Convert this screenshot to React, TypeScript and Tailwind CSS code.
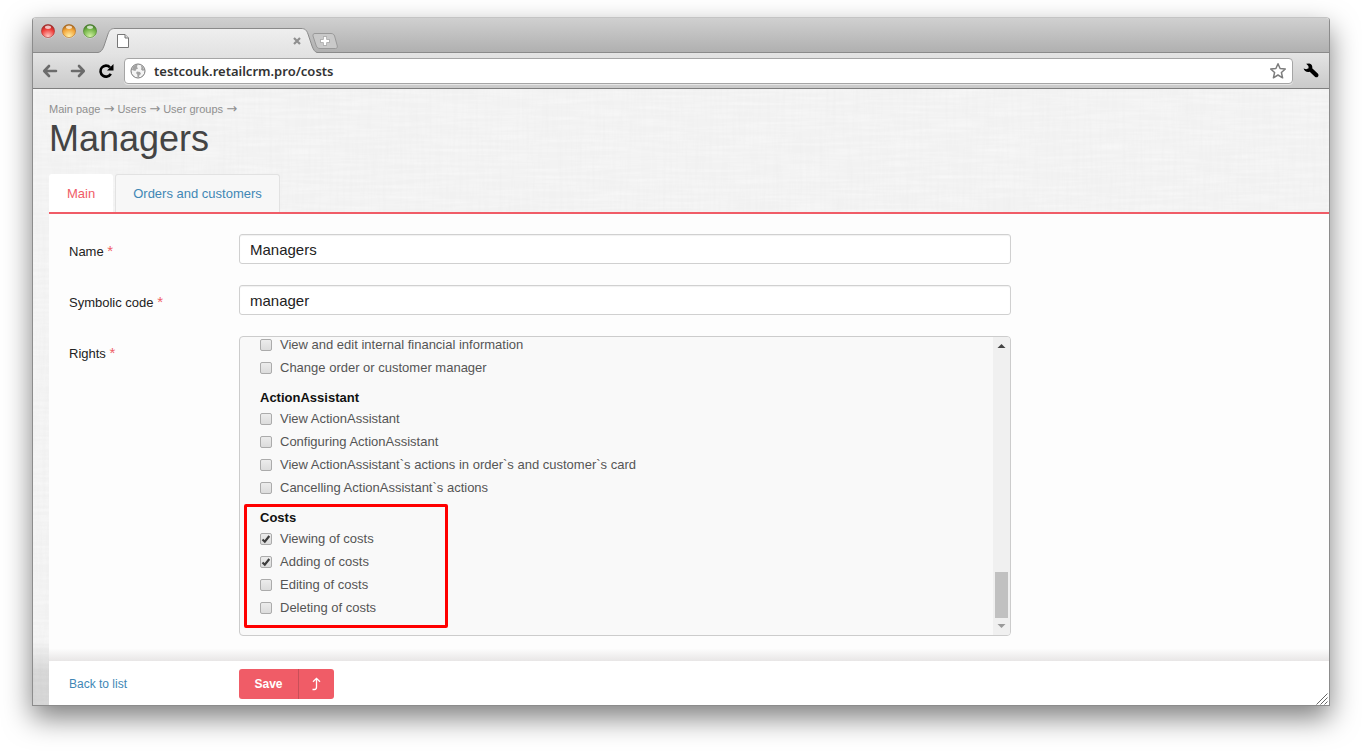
import { useState } from "react";

interface Right {
  id: string;
  label: string;
  checked?: boolean;
}

interface RightGroup {
  title?: string;
  highlighted?: boolean;
  rights: Right[];
}

const GROUPS: RightGroup[] = [
  {
    rights: [
      { id: "finance", label: "View and edit internal financial information" },
      { id: "change-manager", label: "Change order or customer manager" },
    ],
  },
  {
    title: "ActionAssistant",
    rights: [
      { id: "aa-view", label: "View ActionAssistant" },
      { id: "aa-configure", label: "Configuring ActionAssistant" },
      { id: "aa-actions", label: "View ActionAssistant`s actions in order`s and customer`s card" },
      { id: "aa-cancel", label: "Cancelling ActionAssistant`s actions" },
    ],
  },
  {
    title: "Costs",
    highlighted: true,
    rights: [
      { id: "costs-view", label: "Viewing of costs", checked: true },
      { id: "costs-add", label: "Adding of costs", checked: true },
      { id: "costs-edit", label: "Editing of costs" },
      { id: "costs-delete", label: "Deleting of costs" },
    ],
  },
];

function TrafficLight({ id, label, dark, mid, light }: { id: string; label: string; dark: string; mid: string; light: string }) {
  return (
    <button aria-label={label} className="h-4 w-4">
      <svg viewBox="0 0 16 16" className="h-4 w-4">
        <defs>
          <radialGradient id={id} cx="0.5" cy="0.9" r="0.85">
            <stop offset="0" stopColor={light} />
            <stop offset="0.65" stopColor={mid} />
            <stop offset="1" stopColor={dark} />
          </radialGradient>
        </defs>
        <circle cx="8" cy="8.8" r="6.8" fill="#fff" opacity="0.5" />
        <circle cx="8" cy="8" r="6.6" fill={`url(#${id})`} stroke={dark} strokeOpacity="0.7" strokeWidth="0.8" />
        <ellipse cx="8" cy="4.2" rx="3" ry="1.700" fill="#fff" opacity="0.7" />
      </svg>
    </button>
  );
}

function TabStrip() {
  return (
    <div className="flex h-[35px] border-b border-[#8a8a8a] bg-linear-to-b from-[#d0d0d0] to-[#b0b0b0] pl-[7px]">
      <div className="flex gap-[5px] pt-[5px]">
        <TrafficLight id="close-dot" label="Close window" dark="#a02a28" mid="#ee3c38" light="#ffc9c4" />
        <TrafficLight id="min-dot" label="Minimize window" dark="#a8661c" mid="#f2a437" light="#fff0a8" />
        <TrafficLight id="zoom-dot" label="Zoom window" dark="#457a2a" mid="#74b548" light="#d3f3a4" />
      </div>
      <div className="relative -mb-px mt-[10px] h-[25px] w-[219px]">
        <svg viewBox="0 0 219 25" className="absolute inset-0 h-full w-full">
          <defs>
            <linearGradient id="tab-fill" x1="0" y1="0" x2="0" y2="1">
              <stop offset="0" stopColor="#efefef" />
              <stop offset="1" stopColor="#e3e3e3" />
            </linearGradient>
          </defs>
          <path
            d="M0 24.5C3 24 4.500 22 6 18L10 6C11.500 2 13 .5 17 .5H203C207 .5 208.500 2 210 6L214 18C215.500 22 217 24 219 24.500V25H0Z"
            fill="url(#tab-fill)"
          />
          <path
            d="M0 24.5C3 24 4.500 22 6 18L10 6C11.500 2 13 .5 17 .5H203C207 .5 208.500 2 210 6L214 18C215.500 22 217 24 219 24.500"
            fill="none"
            stroke="#8a8a8a"
          />
        </svg>
        <div className="relative flex h-full items-center justify-between pl-[19px] pr-4">
          <svg viewBox="0 0 12 14" className="h-[14px] w-3">
            <path d="M.5.5H8L11.500 4V13.500H.5Z" fill="#fff" stroke="#777" />
            <path d="M8 .5V4H11.500" fill="#ddd" stroke="#777" />
          </svg>
          <button aria-label="Close tab">
            <svg viewBox="0 0 8 8" className="h-2 w-2">
              <path d="M1 1L7 7M7 1L1 7" stroke="#8f8f8f" strokeWidth="2.2" />
            </svg>
          </button>
        </div>
      </div>
      <button aria-label="New tab" className="-ml-[5px] mt-[15px] h-4">
        <svg viewBox="0 0 26 16" className="h-4 w-[26px]">
          <path d="M3 .5H19C21 .5 22 1.500 22.600 3L25.300 13C25.500 14.500 25 15.500 23.500 15.500H8C6 15.500 5 14.500 4.300 13L1 3C.6 1.500 1.500 .5 3 .5Z" fill="#c9c9c9" stroke="#999" />
          <path d="M13 3.500V12.500M8.500 8H17.500" stroke="#9a9a9a" strokeWidth="4" />
          <path d="M13 4V12M9 8H17" stroke="#fff" strokeWidth="2.600" />
        </svg>
      </button>
    </div>
  );
}

function Toolbar() {
  return (
    <div className="flex h-9 items-center border-b border-[#7f7f7f] bg-linear-to-b from-[#e4e4e4] to-[#cacaca] pl-[9px] pr-[10px]">
      <button aria-label="Back" className="mr-3">
        <svg viewBox="0 0 16 14" className="h-[14px] w-4" fill="none" stroke="#6b6b6b" strokeWidth="2.600" strokeLinecap="round" strokeLinejoin="round">
          <path d="M14 7H2.500M7 2L2.200 7L7 12" />
        </svg>
      </button>
      <button aria-label="Forward" className="mr-3">
        <svg viewBox="0 0 16 14" className="h-[14px] w-4" fill="none" stroke="#6b6b6b" strokeWidth="2.600" strokeLinecap="round" strokeLinejoin="round">
          <path d="M2 7H13.500M9 2L13.800 7L9 12" />
        </svg>
      </button>
      <button aria-label="Reload" className="mr-[10px]">
        <svg viewBox="0 0 16 16" className="h-4 w-4">
          <path d="M12 4.300A5.500 5.500 0 1 0 12.800 10.800" fill="none" stroke="#000" strokeWidth="2.600" />
          <path d="M15.500 1V7.500H9Z" fill="#000" />
        </svg>
      </button>
      <div className="flex h-[26px] min-w-0 flex-1 items-center rounded-[4px] border border-[#a5a5a5] bg-white px-[5px] shadow-[0_1px_0_rgba(255,255,255,0.5)]">
        <svg viewBox="0 0 16 16" className="h-4 w-4 shrink-0">
          <circle cx="8" cy="8" r="7" fill="#f4f4f4" stroke="#777" />
          <path d="M2.500 4.500C4 2.500 6 1.500 7.500 2L7 4L8 5.500L6 6.500L5.500 8L3.500 7.500L2 7ZM7 8.500L10 9L11 11L9.500 12L8.800 14.300L7.500 14L7.300 11.500L6 10ZM10.500 2L13 4L14.200 7L13 8L11 6.500L11.500 4.500Z" fill="#a3a3a3" />
        </svg>
        <input
          aria-label="Address"
          defaultValue="testcouk.retailcrm.pro/costs"
          className="ml-2 min-w-0 flex-1 font-['Noto_Sans','Open_Sans',sans-serif] text-[13px] font-semibold leading-5 text-[#333] outline-none"
        />
        <button aria-label="Bookmark this page">
          <svg viewBox="0 0 18 18" className="h-[18px] w-[18px]">
            <path d="M9 1.800L11.100 6.500L16.300 7L12.400 10.500L13.600 15.800L9 13L4.400 15.800L5.600 10.500L1.700 7L6.900 6.500Z" fill="#fff" stroke="#7d7d7d" strokeWidth="1.500" strokeLinejoin="round" />
          </svg>
        </button>
      </div>
      <button aria-label="Tools" className="ml-[10px]">
        <svg viewBox="0 0 16 16" className="h-4 w-4">
          <path d="M3.200 .8L6.300 .6C8.500 1 9.700 3 9.200 5.300L15 10.800C16.500 12.800 14.300 15.200 12.200 13.900L6.700 8.700C4 9.600 1.300 8.300 .6 5.500L3.200 6.300L5.600 5.300L5.400 2.900Z" fill="#000" />
        </svg>
      </button>
    </div>
  );
}

// woven paper: two noise layers, one stretched along each axis
function Linen() {
  return (
    <svg aria-hidden="true" className="absolute inset-0 h-full w-full">
      <filter id="weft" x="0" y="0" width="100%" height="100%">
        <feTurbulence type="fractalNoise" baseFrequency="0.02 0.3" numOctaves="2" seed="4" />
        <feColorMatrix values="0 0 0 0 1  0 0 0 0 1  0 0 0 0 1  1.200 0 0 0 -0.400" />
      </filter>
      <filter id="warp" x="0" y="0" width="100%" height="100%">
        <feTurbulence type="fractalNoise" baseFrequency="0.3 0.02" numOctaves="2" seed="9" />
        <feColorMatrix values="0 0 0 0 0.8  0 0 0 0 0.8  0 0 0 0 0.8  0.400 0 0 0 -0.160" />
      </filter>
      <rect width="100%" height="100%" filter="url(#weft)" opacity="0.6" />
      <rect width="100%" height="100%" filter="url(#warp)" />
    </svg>
  );
}

function Arrow() {
  return <span className="font-['DejaVu_Sans',sans-serif] text-[13px]">→</span>;
}

function FieldLabel({ htmlFor, children }: { htmlFor?: string; children: string }) {
  return (
    <label htmlFor={htmlFor} className="w-[170px] shrink-0 pt-[9px] text-[13px] leading-4 text-[#222]">
      {children} <span className="text-[15px] text-[#ef5e67]">*</span>
    </label>
  );
}

function TextField({ id, label, value }: { id: string; label: string; value: string }) {
  return (
    <div className="flex">
      <FieldLabel htmlFor={id}>{label}</FieldLabel>
      <input
        id={id}
        defaultValue={value}
        className="h-[30px] w-full max-w-[772px] rounded-[3px] border border-[#d0d0d0] bg-white px-[10px] text-[15px] text-[#222] shadow-[inset_0_1px_1px_rgba(0,0,0,0.06)] outline-none"
      />
    </div>
  );
}

function RightRow({ right }: { right: Right }) {
  const [checked, setChecked] = useState(!!right.checked);

  return (
    <div className="flex h-[23px] items-center">
      <span className="relative mt-px h-3 w-3">
        <input
          id={right.id}
          type="checkbox"
          checked={checked}
          onChange={(e) => setChecked(e.target.checked)}
          className="block h-3 w-3 appearance-none rounded-[2px] border border-[#ababab] bg-linear-to-b from-[#ececec] to-[#dcdcdc]"
        />
        {checked && (
          <svg viewBox="0 0 12 12" className="pointer-events-none absolute inset-0 h-full w-full">
            <path d="M2.500 6.500L4.800 8.700L9.300 3" fill="none" stroke="#3c3c3c" strokeWidth="2.200" />
          </svg>
        )}
      </span>
      <label htmlFor={right.id} className="pl-2 text-[13px] leading-4 text-[#555]">
        {right.label}
      </label>
    </div>
  );
}

function ScrollBar() {
  return (
    <div aria-hidden="true" className="flex w-[17px] flex-col items-center bg-[#f0f0f0]">
      <svg viewBox="0 0 17 17" className="h-[17px] w-[17px]">
        <path d="M4.500 11L8.500 7L12.500 11Z" fill="#444" />
      </svg>
      <div className="flex-1" />
      <div className="h-[46px] w-[13px] bg-[#c1c1c1]" />
      <svg viewBox="0 0 17 17" className="h-[17px] w-[17px]">
        <path d="M4.500 6L8.500 10L12.500 6Z" fill="#9a9a9a" />
      </svg>
    </div>
  );
}

function RightsList() {
  return (
    <div className="flex h-[300px] w-full max-w-[772px] overflow-hidden rounded-[4px] border border-[#ccc] bg-[#f9f9f9]">
      <div className="flex flex-1 flex-col justify-end pb-4 pl-5">
        {GROUPS.map((group, i) => (
          <div key={i} className="relative shrink-0">
            {group.title && <p className="pt-[10px] text-[13px] font-bold leading-[18px] text-[#111]">{group.title}</p>}
            {group.rights.map((r) => (
              <RightRow key={r.id} right={r} />
            ))}
            {group.highlighted && (
              <div className="pointer-events-none absolute -bottom-[9px] -left-4 top-[5px] w-[204px] rounded-[2px] border-[3px] border-[#f00]" />
            )}
          </div>
        ))}
      </div>
      <ScrollBar />
    </div>
  );
}

function Footer() {
  return (
    <div className="relative flex h-11 items-center rounded-tl-[3px] bg-white pl-5 pt-[2px]">
      <a href="#list" className="w-[170px] text-[12px] leading-4 text-[#3f87b5]">
        Back to list
      </a>
      <div className="flex h-[30px] overflow-hidden rounded-[3px] bg-[#f05c67] text-white">
        <button className="w-[59px] text-[12px] font-bold">Save</button>
        <button aria-label="Save and return" className="flex w-9 items-center justify-center border-l border-[#c94f58]">
          <svg viewBox="0 0 10 14" className="h-[14px] w-[10px]" fill="none" stroke="#fff" strokeWidth="1.300">
            <path d="M.5 12.500H2.500C4 12.500 4.500 11.500 4.500 10V1.500M1 4.800L4.500 1.300L8 4.800" />
          </svg>
        </button>
      </div>
      <svg aria-hidden="true" viewBox="0 0 12 12" className="absolute bottom-0 right-px h-3 w-3" stroke="#666">
        <path d="M.5 11.500L11.500 .5M4.500 11.500L11.500 4.500M8.500 11.500L11.500 8.500" />
      </svg>
    </div>
  );
}

export default function App() {
  return (
    <div className="flex min-h-screen flex-col bg-white px-8 pb-[47px] pt-[17px] font-['Liberation_Sans',Arial,sans-serif]">
      <div className="flex flex-1 flex-col overflow-hidden rounded-t-[4px] border border-[#8c8c8c] border-t-[#c4c4c4] shadow-[0_12px_28px_rgba(0,0,0,0.5)]">
        <TabStrip />
        <Toolbar />
        <main className="relative flex flex-1 flex-col bg-[#f2f2f2] pl-4">
          <Linen />
          <div aria-hidden="true" className="absolute bottom-0 left-0 h-16 w-4 bg-linear-to-b from-transparent via-black/12 to-black/12" />
          <header className="relative border-b-2 border-[#f05c67] pt-3">
            <nav className="text-[11px] leading-4 text-[#8f8f8f]">
              <a href="#main">Main page</a> <Arrow /> <a href="#users">Users</a> <Arrow /> <a href="#groups">User groups</a> <Arrow />
            </nav>
            <h1 className="text-[36px] leading-[44px] text-[#444]">Managers</h1>
            <div className="mt-[13px] flex h-[38px] gap-[2px] text-[13px]">
              <button className="rounded-t-[3px] border border-b-0 border-white bg-white px-[17px] text-[#f05c67]">Main</button>
              <button className="rounded-t-[3px] border border-b-0 border-[#e2e2e2] bg-[#f7f7f7] px-[17px] text-[#3f87b5]">
                Orders and customers
              </button>
            </div>
          </header>
          <form className="relative flex flex-1 flex-col bg-[#fdfdfd]" onSubmit={(e) => e.preventDefault()}>
            <div className="flex flex-1 flex-col gap-[21px] px-5 pt-5">
              <TextField id="name" label="Name" value="Managers" />
              <TextField id="code" label="Symbolic code" value="manager" />
              <div className="flex">
                <FieldLabel>Rights</FieldLabel>
                <RightsList />
              </div>
            </div>
            <div aria-hidden="true" className="h-[25px] bg-linear-to-b from-transparent via-transparent to-[#e8e6e6]" />
            <Footer />
          </form>
        </main>
      </div>
    </div>
  );
}
